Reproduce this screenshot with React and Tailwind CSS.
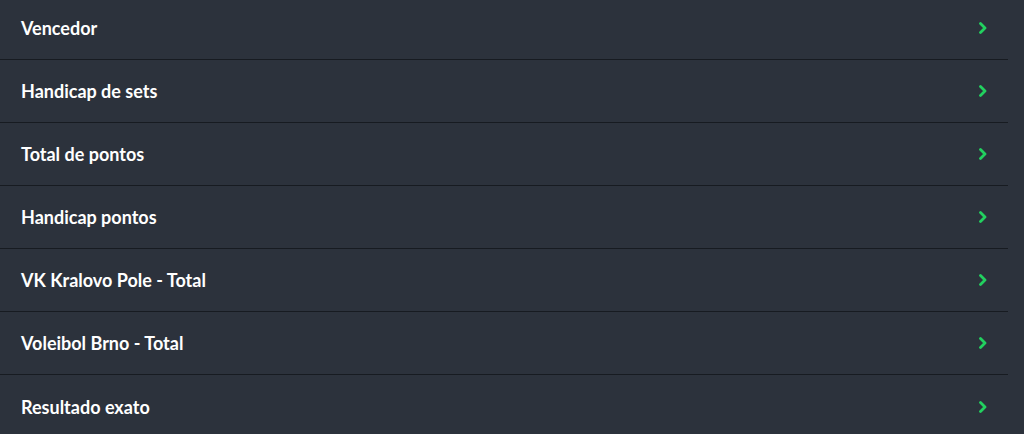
import React from "react";

const items = [
  "Vencedor",
  "Handicap de sets",
  "Total de pontos",
  "Handicap pontos",
  "VK Kralovo Pole - Total",
  "Voleibol Brno - Total",
  "Resultado exato",
];

function Chevron() {
  return (
    <svg width="10" height="12" viewBox="0 0 10 12" fill="none">
      <path d="M2.5 1.5L7 6L2.5 10.5" stroke="#22d15f" strokeWidth="2.8" strokeLinecap="round" strokeLinejoin="round" />
    </svg>
  );
}

export default function App() {
  return (
    <div className="w-[1024px] h-[434px] bg-[#2c323c] overflow-hidden" style={{ fontFamily: "Lato, 'Open Sans', sans-serif" }}>
      <div className="w-[1008px] -mt-[3px] flex flex-col">
        {items.map((t, i) => (
          <div
            key={t}
            className={`h-[63px] shrink-0 flex items-center justify-between pl-[21px] pr-[20px] ${i < items.length - 1 ? "border-b border-[#171b21]" : ""}`}
          >
            <span className="text-white font-bold text-[18px] leading-none">{t}</span>
            <Chevron />
          </div>
        ))}
      </div>
    </div>
  );
}
